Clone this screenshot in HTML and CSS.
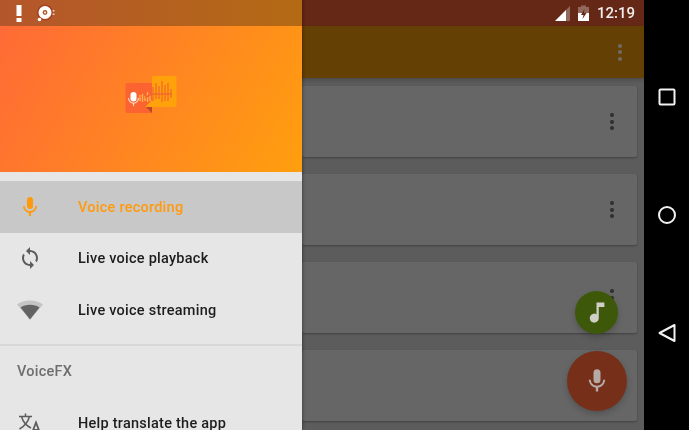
FILE: index.html
```html
<!DOCTYPE html>
<html lang="en">
<head>
  <meta charset="UTF-8">
  <meta name="viewport" content="width=device-width, initial-scale=1.0">
  <title>VoiceFX</title>
  <link rel="stylesheet" href="styles.css">
</head>
<body>
  <div class="device">
    <div class="screen">
      <div class="status-bar">
        <svg class="signal" width="16" height="16" viewBox="0 0 16 16"><path d="M15 0V15H0Z" fill="#fff" opacity=".3"/><path d="M11 4V15H0Z" fill="#fff"/></svg>
        <svg class="battery" width="14" height="18" viewBox="0 0 14 18"><path d="M4 3V1.500h5V3h3V17H1V3Z" fill="#fff" opacity=".3"/><path d="M1 9H12V17H1Z" fill="#fff"/><path d="M7.500 5 4 11H6.500L5.500 15 9.500 9H7Z" fill="#652816"/></svg>
        <span class="time">12:19</span>
      </div>
      <div class="toolbar">
        <span class="dots dots-toolbar"><i></i><i></i><i></i></span>
      </div>
      <div class="list">
        <div class="card"><span class="dots"><i></i><i></i><i></i></span></div>
        <div class="card"><span class="dots"><i></i><i></i><i></i></span></div>
        <div class="card"><span class="dots"><i></i><i></i><i></i></span></div>
        <div class="card"></div>
      </div>

      <div class="fab fab-small">
        <svg width="27" height="27" viewBox="0 0 24 24"><path d="M12 3v10.550A4 4 0 1 0 14 17V7h5V3z" fill="#cfcfc8"/></svg>
      </div>
      <div class="fab fab-large">
        <svg width="28" height="28" viewBox="0 0 24 24"><path d="M12 14a3 3 0 0 0 3-3V5a3 3 0 0 0-6 0v6a3 3 0 0 0 3 3zm5.300-3c0 3-2.540 5.100-5.300 5.100S6.700 14 6.700 11H5c0 3.410 2.720 6.230 6 6.720V21h2v-3.280c3.280-.48 6-3.300 6-6.720z" fill="#b5aaa6"/></svg>
      </div>

      <div class="drawer">
        <div class="drawer-status">
          <svg width="6" height="17" viewBox="0 0 6 17"><path d="M0.500 0H5.500V11H0.500ZM0.500 13H5.500V17H0.500Z" fill="#fff"/></svg>
          <svg class="disc" width="18" height="18" viewBox="0 0 18 18">
            <circle cx="8" cy="8.500" r="8" fill="#a8401c"/>
            <circle cx="8" cy="8.500" r="6.500" fill="#fff"/>
            <circle cx="8" cy="8.500" r="2.400" fill="#b4582a"/>
            <circle cx="8" cy="8.500" r="1" fill="#fff"/>
            <circle cx="2.500" cy="15.500" r="1.800" fill="#fff"/>
            <path d="M15.500 6h2v1.500h-2zM15.500 9.500h2V11h-2z" fill="#fff" opacity=".7"/>
          </svg>
        </div>
        <div class="drawer-header">
          <svg class="logo" width="52" height="39" viewBox="0 0 52 39">
            <path d="M2 8H27V25H27V38H2a1.500 1.500 0 0 1-1.500-1.500V9.500A1.500 1.500 0 0 1 2 8Z" fill="#fb6330"/>
            <path d="M21 32 27 38V32Z" fill="#b9482a"/>
            <path d="M28 1H50a1.500 1.500 0 0 1 1.500 1.500V30.500a1.500 1.500 0 0 1-1.500 1.500H20L27 25V2Z" fill="#ffa10a"/>
            <rect x="5.500" y="17" width="6" height="9.500" rx="3" fill="#fff"/>
            <path d="M3.500 23c0 3 2.300 5.200 5 5.200s5-2.200 5-5.200" fill="none" stroke="#fff" stroke-width="1.100" opacity=".75"/>
            <path d="M8.500 28v3" stroke="#fff" stroke-width="1.100" opacity=".75"/>
            <path d="M15 20v6M17.500 19v8M20 21v5M22.500 17v10M25 19v7" stroke="#ffb24a" stroke-width="1.400"/>
            <path d="M20 22.500 27 19H47" fill="none" stroke="#f4622c" stroke-width="1.400"/>
            <path d="M28 12v14M31 8v16M34 11v13M37 6v21M40 10v16M43 8v18M46 14v9" stroke="#f4702a" stroke-width="1.400"/>
          </svg>
        </div>
        <div class="drawer-gap"></div>
        <div class="menu-row active">
          <span class="menu-icon">
            <svg width="24" height="24" viewBox="0 0 24 24"><path d="M12 14a3 3 0 0 0 3-3V5a3 3 0 0 0-6 0v6a3 3 0 0 0 3 3zm5.300-3c0 3-2.540 5.100-5.300 5.100S6.700 14 6.700 11H5c0 3.410 2.720 6.230 6 6.720V21h2v-3.280c3.280-.48 6-3.300 6-6.720z" fill="#ff9a0e"/></svg>
          </span>
          <span class="menu-text">Voice recording</span>
        </div>
        <div class="menu-row">
          <span class="menu-icon">
            <svg width="24" height="24" viewBox="0 0 24 24"><path d="M12 4V1L8 5l4 4V6c3.310 0 6 2.690 6 6 0 1.010-.25 1.970-.7 2.800l1.460 1.460A7.930 7.930 0 0 0 20 12c0-4.420-3.580-8-8-8zm0 14c-3.310 0-6-2.690-6-6 0-1.010.25-1.970.7-2.800L5.240 7.740A7.930 7.930 0 0 0 4 12c0 4.420 3.580 8 8 8v3l4-4-4-4v3z" fill="#5c5c5c"/></svg>
          </span>
          <span class="menu-text">Live voice playback</span>
        </div>
        <div class="menu-row">
          <span class="menu-icon">
            <svg width="28" height="24" viewBox="0 0 28 24"><path d="M14 21.500 1 6.500C4.500 3.800 9 2.500 14 2.500s9.500 1.300 13 4Z" fill="#c4c4c4"/><path d="M14 21.500 4.500 9.500C7 7.800 10.300 6.800 14 6.800s7 1 9.500 2.700Z" fill="#636363"/></svg>
          </span>
          <span class="menu-text">Live voice streaming</span>
        </div>
        <div class="drawer-divider"></div>
        <div class="section-label">VoiceFX</div>
        <div class="menu-row">
          <span class="menu-icon">
            <svg width="24" height="24" viewBox="0 0 24 24" fill="none" stroke="#5c5c5c" stroke-width="1.500"><path d="M1 5.500H14M7.500 2.500V5.500M11.500 5.500C10 11 6 15.500 1.500 18M3.500 5.500C5 11 9 15 13 17"/><path d="M14 22 18 11.500 22 22M15.500 19H20.500" stroke-width="1.800"/></svg>
          </span>
          <span class="menu-text">Help translate the app</span>
        </div>
      </div>
    </div>

    <div class="nav-bar">
      <svg width="18" height="18" viewBox="0 0 18 18"><rect x="1.500" y="1.500" width="15" height="15" rx="1" fill="none" stroke="#f2f2f2" stroke-width="2"/></svg>
      <svg width="20" height="20" viewBox="0 0 20 20"><circle cx="10" cy="10" r="8" fill="none" stroke="#f2f2f2" stroke-width="2"/></svg>
      <svg width="18" height="20" viewBox="0 0 18 20"><path d="M16.500 2V18L1.500 10Z" fill="none" stroke="#f2f2f2" stroke-width="2" stroke-linejoin="round"/></svg>
    </div>
  </div>
</body>
</html>
```

FILE: styles.css
```css
html, body {
  margin: 0;
  height: 100%;
  overflow: hidden;
}
body {
  font-family: Roboto, "Liberation Sans", sans-serif;
  background-color: #000;
}
.device {
  display: flex;
  width: 689px;
  height: 430px;
  filter: blur(0.4px);
}
.screen {
  position: relative;
  width: 644px;
  height: 430px;
  overflow: hidden;
  background-color: #5c5c5c;
}
.status-bar {
  display: flex;
  justify-content: flex-end;
  align-items: center;
  gap: 6px;
  height: 26px;
  padding-right: 9px;
  box-sizing: border-box;
  background-color: #652816;
}
.signal {
  margin-top: 1px;
}
.time {
  color: #f2eeed;
  font-size: 15px;
  font-weight: 500;
}
.toolbar {
  display: flex;
  justify-content: flex-end;
  align-items: center;
  height: 52px;
  padding-right: 22px;
  box-sizing: border-box;
  background-color: #654005;
  box-shadow: 0 2px 4px rgba(0, 0, 0, 0.2);
  position: relative;
}
.dots {
  display: flex;
  flex-direction: column;
  gap: 2.500px;
}
.dots i {
  display: block;
  width: 4px;
  height: 4px;
  border-radius: 50%;
  background-color: #2f2f2f;
}
.dots-toolbar i {
  background-color: #6c6c60;
}
.list {
  display: flex;
  flex-direction: column;
  gap: 17px;
  padding: 8px 7px 0 302px;
}
.card {
  display: flex;
  justify-content: flex-end;
  align-items: center;
  height: 71px;
  padding-right: 23px;
  box-sizing: border-box;
  background-color: #666;
  border-radius: 2px;
  box-shadow: 0 1px 2px rgba(0, 0, 0, 0.3);
}
.fab {
  position: absolute;
  display: flex;
  justify-content: center;
  align-items: center;
  border-radius: 50%;
  box-shadow: 0 3px 6px rgba(0, 0, 0, 0.2);
}
.fab-small {
  left: 575px;
  top: 291px;
  width: 43px;
  height: 43px;
  background-color: #3d5808;
}
.fab-large {
  left: 567px;
  top: 351px;
  width: 60px;
  height: 60px;
  background-color: #76301a;
}
.drawer {
  position: absolute;
  left: 0;
  top: 0;
  width: 302px;
  height: 430px;
  overflow: hidden;
  background-color: #e6e6e6;
  box-shadow: 1px 0 3px rgba(0, 0, 0, 0.3);
}
.drawer-status {
  display: flex;
  align-items: center;
  gap: 15px;
  height: 26px;
  padding-left: 16px;
  box-sizing: border-box;
  background: linear-gradient(90deg, #b4562c, #b46a14);
}
.drawer-header {
  display: flex;
  justify-content: center;
  align-items: center;
  height: 146px;
  background: linear-gradient(120deg, #ff6a36, #ff9f0e);
}
.logo {
  margin-bottom: 10px;
}
.drawer-gap {
  height: 9px;
}
.menu-row {
  display: flex;
  align-items: center;
  height: 51.500px;
  color: #1d1d1d;
  font-size: 14.500px;
  font-weight: 500;
  letter-spacing: 0.25px;
}
.menu-row.active {
  background-color: #c8c8c8;
  color: #ff9a0e;
}
.menu-text {
  padding-top: 1px;
}
.menu-icon {
  display: flex;
  justify-content: center;
  width: 60px;
  margin-right: 18px;
}
.drawer-divider {
  height: 2px;
  margin-top: 8px;
  background-color: #d8d8d8;
}
.section-label {
  display: flex;
  align-items: center;
  height: 52px;
  padding-left: 17px;
  color: #6e6e6e;
  font-size: 14.500px;
  font-weight: 500;
  letter-spacing: 0.25px;
}
.nav-bar {
  display: flex;
  flex-direction: column;
  align-items: center;
  justify-content: space-between;
  width: 45px;
  height: 430px;
  padding: 88px 0 87px;
  box-sizing: border-box;
}
```
